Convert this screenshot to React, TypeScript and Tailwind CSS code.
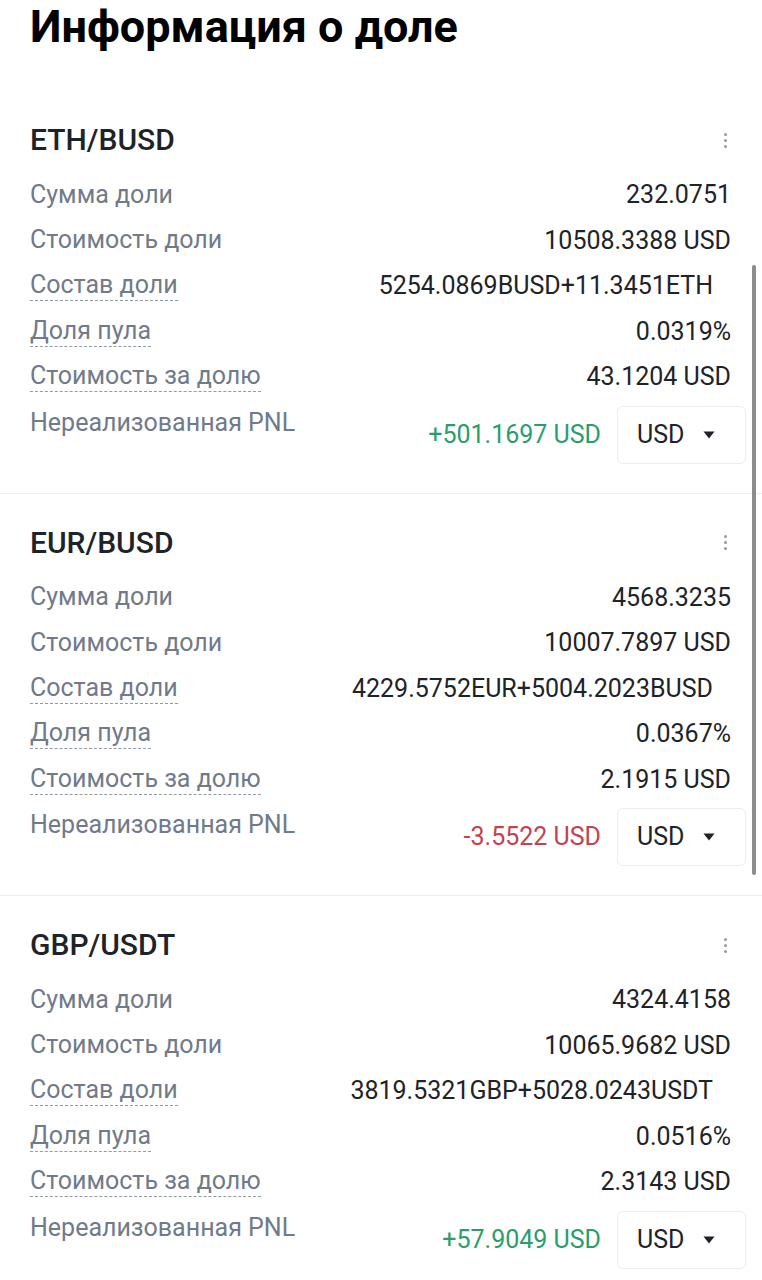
import { Fragment } from 'react';

type Row = { label: string; value: string; dashed?: boolean; offset?: boolean };

interface Share {
  pair: string;
  rows: Row[];
  pnl: string;
  positive: boolean;
}

const shares: Share[] = [
  {
    pair: 'ETH/BUSD',
    rows: [
      { label: 'Сумма доли', value: '232.0751' },
      { label: 'Стоимость доли', value: '10508.3388 USD' },
      { label: 'Состав доли', value: '5254.0869BUSD+11.3451ETH', dashed: true, offset: true },
      { label: 'Доля пула', value: '0.0319%', dashed: true },
      { label: 'Стоимость за долю', value: '43.1204 USD', dashed: true },
    ],
    pnl: '+501.1697 USD',
    positive: true,
  },
  {
    pair: 'EUR/BUSD',
    rows: [
      { label: 'Сумма доли', value: '4568.3235' },
      { label: 'Стоимость доли', value: '10007.7897 USD' },
      { label: 'Состав доли', value: '4229.5752EUR+5004.2023BUSD', dashed: true, offset: true },
      { label: 'Доля пула', value: '0.0367%', dashed: true },
      { label: 'Стоимость за долю', value: '2.1915 USD', dashed: true },
    ],
    pnl: '-3.5522 USD',
    positive: false,
  },
  {
    pair: 'GBP/USDT',
    rows: [
      { label: 'Сумма доли', value: '4324.4158' },
      { label: 'Стоимость доли', value: '10065.9682 USD' },
      { label: 'Состав доли', value: '3819.5321GBP+5028.0243USDT', dashed: true, offset: true },
      { label: 'Доля пула', value: '0.0516%', dashed: true },
      { label: 'Стоимость за долю', value: '2.3143 USD', dashed: true },
    ],
    pnl: '+57.9049 USD',
    positive: true,
  },
];

const Kebab = () => (
  <div className="w-[20px] h-[20px] mr-[11px] flex flex-col items-center justify-center gap-[3px]">
    <span className="w-[3px] h-[3px] rounded-full bg-[#929aa5]" />
    <span className="w-[3px] h-[3px] rounded-full bg-[#929aa5]" />
    <span className="w-[3px] h-[3px] rounded-full bg-[#929aa5]" />
  </div>
);

const ShareCard = ({ share, last }: { share: Share; last: boolean }) => (
  <div className={`pl-[30px] pr-[16px] pt-[32px] pb-[29px] ${last ? '' : 'border-b border-[#eaecef]'}`}>
    <div className="flex items-center justify-between h-[34px]">
      <h2 className="text-[30px] leading-[34px] font-medium text-[#1e2329]">{share.pair}</h2>
      <Kebab />
    </div>
    <div className="mt-[15px]">
      {share.rows.map((r) => (
        <div key={r.label} className="flex items-center justify-between h-[45.5px] pr-[15px]">
          <span
            className={`inline-block text-[25px] leading-[30px] text-[#707a8a] ${
              r.dashed ? 'border-b border-dashed border-[#929aa5]' : ''
            }`}
          >
            {r.label}
          </span>
          <span className={`text-[25px] text-[#1e2329] ${r.offset ? 'pr-[18px]' : ''}`}>{r.value}</span>
        </div>
      ))}
      <div className="flex items-start justify-between">
        <span className="text-[25px] leading-[45px] text-[#707a8a]">Нереализованная PNL</span>
        <div className="flex items-center gap-[16px] mt-[6px]">
          <span className={`text-[25px] ${share.positive ? 'text-[#2a9d6c]' : 'text-[#c4424f]'}`}>
            {share.pnl}
          </span>
          <div className="w-[129px] h-[58px] border border-[#eaecef] rounded-[6px] flex items-center pl-[19px] pr-[30px] justify-between">
            <span className="text-[25px] text-[#1e2329]">USD</span>
            <svg width="12" height="8" viewBox="0 0 12 8">
              <path d="M0.5 0.5h11L6 7.5z" fill="#1e2329" />
            </svg>
          </div>
        </div>
      </div>
    </div>
  </div>
);

export default function App() {
  return (
    <div className="relative w-[762px] h-[1280px] overflow-hidden bg-white font-['Roboto',sans-serif]">
      <div className="pl-[30px] h-[91px]">
        <h1 className="text-[45px] leading-[53px] font-bold text-[#000]">Информация о доле</h1>
      </div>
      {shares.map((s, i) => (
        <Fragment key={s.pair}>
          <ShareCard share={s} last={i === shares.length - 1} />
        </Fragment>
      ))}
      <div className="absolute right-[6px] top-[265px] w-[4px] h-[610px] rounded-full bg-[#8c8c8c]" />
    </div>
  );
}
